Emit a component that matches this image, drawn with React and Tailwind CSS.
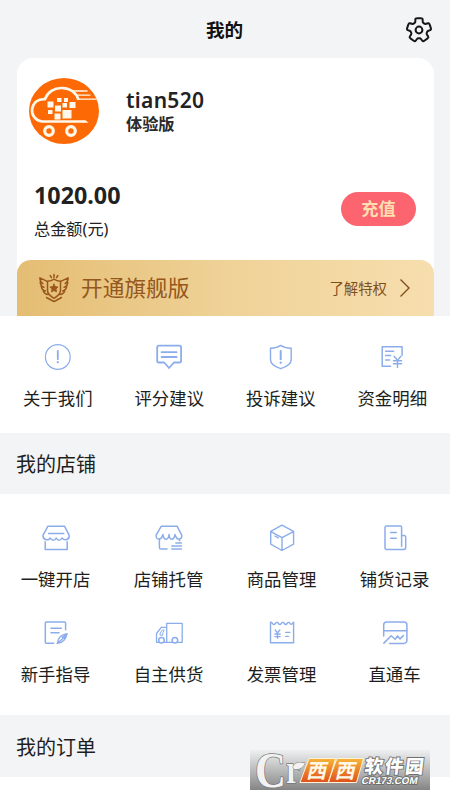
import { clsx } from 'clsx';

const Icon = ({ children }) => (
  <svg
    viewBox="0 0 30 30"
    className="h-[30px] w-[30px] shrink-0"
    fill="none"
    stroke="#8badeb"
    strokeWidth="1.5"
    strokeLinecap="round"
    strokeLinejoin="round"
  >
    {children}
  </svg>
);

const AboutIcon = () => (
  <Icon>
    <circle cx="14.8" cy="15" r="12.4" strokeWidth="1.2" />
    <path d="M14.8 8.8v8.4" strokeWidth="1.8" />
    <path d="M14.8 20.1v.1" strokeWidth="2.2" />
  </Icon>
);

const CommentIcon = () => (
  <Icon>
    <path d="M5 3.6h20.3a1.8 1.8 0 0 1 1.8 1.8v13.3a1.8 1.8 0 0 1-1.8 1.8H20L15.1 26l-4.900-5.500H5a1.800 1.800 0 0 1-1.800-1.800V5.400A1.800 1.800 0 0 1 5 3.600z" strokeWidth="1.8" />
    <path d="M7.600 10.200h15M7.600 15h15" strokeWidth="1.8" />
  </Icon>
);

const ComplaintIcon = () => (
  <Icon>
    <path d="M14.7 3.4c3 2.1 6.3 2.7 10.5 2.9v11.2c0 4-4.5 7.3-10.5 9.2-6-1.9-10.200-5.200-10.200-9.200V6.300c4-.2 7.200-.8 10.200-2.900z" strokeWidth="1.4" />
    <path d="M14.700 9v8.200" strokeWidth="2" />
    <path d="M14.700 20.700v.1" strokeWidth="2.300" />
  </Icon>
);

const FundIcon = () => (
  <Icon>
    <path d="M13.600 24.200H5.200V4.800h19.900v8.400" />
    <path d="M8.600 9.200h8M8.600 13.600h5M8.600 18h4" />
    <path d="M17.100 14.300l3.400 4 3.400-4M16.400 18.700h8.200M16.400 21.700h8.200M20.500 18.500v6.900" strokeWidth="1.4" />
  </Icon>
);

const ShopIcon = () => (
  <Icon>
    <path d="M6.800 3.300h16.800l4.500 8.800c.9 4.400-4.400 6.400-7.200 2.900-1.500 3-4.400 3-5.700 0-1.600 3-4.500 3-5.900 0-2.600 3.500-8 1.500-7.200-2.900z" />
    <path d="M7.600 10.500h15.200M4.200 18.700v7.800h22v-7.800" />
  </Icon>
);

const HostingIcon = () => (
  <Icon>
    <path d="M7.200 3.300h16l4.500 8.800c.9 4.400-4.500 6.400-6.800-.7-.7 6.300-5.400 6.600-5.900.1-.6 6.500-5.400 6.200-6.100-.1-1.800 7.100-7.300 5.100-6.800.7z" />
    <path d="M5.400 16v8.500a1.600 1.600 0 0 0 1.600 1.600h6M25.500 16.500v1.200M21.800 20h5.600M17.800 23h9.600M17.800 26.100h9.600" />
  </Icon>
);

const GoodsIcon = () => (
  <Icon>
    <path d="M15 2.200l11.600 6.200v12.700L15 27.500 3.700 21.100V8.400zM3.900 8.600L15 14.700l11.400-6.100M15 14.700v12.600M7.900 13l3.500 1.800" strokeWidth="1.4" />
  </Icon>
);

const RecordIcon = () => (
  <Icon>
    <path d="M6.500 3.100h14.100a1 1 0 0 1 1 1v8.400h2.600a1.500 1.500 0 0 1 1.500 1.500v10.600a1.900 1.900 0 0 1-1.900 1.900H6.500a1.500 1.500 0 0 1-1.500-1.500V4.600a1.500 1.500 0 0 1 1.500-1.500z" strokeWidth="1.5" />
    <path d="M21.600 12.500v11M10.700 9.500h5.600M10.700 15.200h5.600" />
  </Icon>
);

const GuideIcon = () => (
  <Icon>
    <path d="M12.700 25.300H5.300a1 1 0 0 1-1-1V5.100a1 1 0 0 1 1-1h18.300a1 1 0 0 1 1 1v6.700M10 10.300h10.300M10 14.700h8" />
    <path d="M26.100 15.600c-4.200.8-7.600 2.800-8.800 6.100l-.7 3.500c5.500-.5 8.200-3.300 9.500-9.600zM16.200 25.600l5.700-5.200" strokeWidth="1.4" />
    <path d="M26.100 15.600l-6 3.300 3.700 2.700z" fill="#8badeb" stroke="none" />
  </Icon>
);

const TruckIcon = () => (
  <Icon>
    <path d="M4.700 24.400H2.500v-8.900l4.800-6.200h5.400V5.300h15.500v19.100h-4.400M18 24.400h-7.700M12.700 9.300v15.100" strokeWidth="1.3" />
    <path d="M9.800 12.100H8.300L6.100 15v2.200h2.700v-2z" strokeWidth="1" />
    <circle cx="7.500" cy="22.300" r="2.800" fill="#fff" />
    <circle cx="20.900" cy="22.300" r="2.800" fill="#fff" />
  </Icon>
);

const InvoiceIcon = () => (
  <Icon>
    <path d="M3.500 4.300c1.300-.3 1.600.7 2.200 1.500.7.900 1.800.9 2.500 0l1-1.400h1.400l1 1.400c.8.900 1.800.9 2.500 0l1-1.400h1.400l1 1.400c.8.900 1.800.9 2.500 0l1-1.400h1.200l.9 1.200c.7.900 1.600.8 2.200 0l1.300-1.300v20.400H3.500z" strokeWidth="1.4" />
    <path d="M8.200 12l2.300 2.900 2.300-2.900M7.900 16h5.300M7.900 18.600h5.300M10.500 15v5.200M18.700 14.400h4.200M18.700 18.400h2.600" strokeWidth="1.4" />
  </Icon>
);

const TrainIcon = () => (
  <Icon>
    <path d="M3.700 18V6.900a3 3 0 0 1 3-3h17.200a3 3 0 0 1 3 3v15.500a3 3 0 0 1-3 3H9.600" />
    <path d="M3.700 12.800h23.200M3.900 25.100l7.300-7.400 4 3.500 2.300-3.300 2.500 3 3.300-3.300" />
  </Icon>
);

// Outline of a five-toothed gear around (14, 14), with every corner rounded.
const gearPath = () => {
  const points = [];
  for (let i = 0; i < 5; i += 1) {
    const tooth = -90 + i * 72;
    [
      [tooth - 17, 12.4],
      [tooth + 17, 12.4],
      [tooth + 26, 8.4],
      [tooth + 46, 8.4],
    ].forEach(([deg, r]) => {
      const rad = (deg * Math.PI) / 180;
      points.push([14 + r * Math.cos(rad), 14 + r * Math.sin(rad)]);
    });
  }
  const between = (a, b, t) => `${(a[0] + (b[0] - a[0]) * t).toFixed(2)} ${(a[1] + (b[1] - a[1]) * t).toFixed(2)}`;
  const corners = points.map((p, i) => {
    const prev = points[(i + points.length - 1) % points.length];
    const next = points[(i + 1) % points.length];
    return `${i === 0 ? 'M' : 'L'}${between(p, prev, 0.28)}Q${p[0].toFixed(2)} ${p[1].toFixed(2)} ${between(p, next, 0.28)}`;
  });
  return `${corners.join('')}Z`;
};

const SettingsIcon = () => (
  <svg viewBox="0 0 28 28" className="h-7 w-7" fill="none" stroke="#161719" strokeWidth="2" strokeLinejoin="round">
    <path d={gearPath()} />
    <circle cx="14" cy="14" r="3.400" />
  </svg>
);

const AvatarLogo = () => (
  <svg viewBox="0 0 70 66" className="h-[66px] w-[70px]" preserveAspectRatio="none">
    <ellipse cx="35" cy="33" rx="35" ry="33" fill="#fd6a05" />
    <g fill="none" stroke="#fff7ea">
      <path d="M55 43.500H13c-7-1-10.500-6.400-9.900-12.500.8-6.500 6-10.300 12.900-9.900C18.500 14 25 9.700 33 10c8.500.4 14.500 5 16.500 12" strokeWidth="2.700" />
      <path d="M43 13h15.500M46.500 17.100h15M49 21.200h19" strokeWidth="1.300" />
      <circle cx="20" cy="53" r="4.300" strokeWidth="3.200" />
      <circle cx="42" cy="53" r="4.300" strokeWidth="3.200" />
    </g>
    <g fill="#fff7ea">
      <path d="M54 42.200h2.500l3 2.600H54z" />
      <rect x="18.500" y="23.500" width="6" height="6" />
      <rect x="28" y="20" width="4.500" height="4" />
      <rect x="35" y="20" width="4" height="4" />
      <rect x="33.500" y="25" width="4.500" height="4.500" />
      <rect x="40.500" y="24" width="6" height="6" />
      <rect x="26" y="27.500" width="6" height="6" />
      <rect x="19" y="32" width="4.500" height="4" />
      <rect x="25.500" y="35.500" width="6" height="6" />
      <rect x="33.500" y="32" width="9" height="8.500" />
    </g>
  </svg>
);

const BadgeIcon = () => (
  <svg viewBox="0 0 32 30" className="h-[30px] w-8" fill="none" stroke="#9a561b" strokeWidth="1.500" strokeLinejoin="round" strokeLinecap="round">
    <path d="M16 6.200c2 1.500 4 2 6.500 2.100v9c0 3.600-2.600 5.800-6.500 8-3.900-2.200-6.500-4.400-6.500-8v-9c2.500-.1 4.500-.6 6.500-2.100z" />
    <path d="M16 11l1.200 2.600 2.900.4-2.100 2 .5 2.900-2.500-1.400-2.500 1.400.5-2.900-2.100-2 2.900-.4z" fill="#9a561b" strokeWidth=".8" />
    <path d="M8.700 8.200L1.900 4.900c.1 2.900 1 4.600 3 5.700M2.200 9.300c.4 3 1.500 4.300 3.700 5M3.300 13.700c.6 2.700 2 4 4.200 4.300M5.300 18.300c1 2.200 2.600 3.300 5.200 3.200M23.300 8.200l6.800-3.300c-.1 2.900-1 4.600-3 5.700M29.800 9.300c-.4 3-1.500 4.300-3.700 5M28.700 13.700c-.6 2.700-2 4-4.200 4.300M26.700 18.300c-1 2.200-2.600 3.300-5.200 3.200M8.500 24.500l5.500 3 2 1 2-1 5.500-3" />
    <path d="M16 1.500v3M12.200 2.600l1.200 1.900M19.800 2.600l-1.200 1.900" />
  </svg>
);

const Watermark = () => (
  <svg viewBox="0 0 180 40" className="absolute left-[250px] top-[750px] h-10 w-[180px] overflow-visible">
    <defs>
      <linearGradient id="plate" x1="0" y1="0" x2="0" y2="1">
        <stop offset="0" stopColor="#eff0f1" />
        <stop offset="1" stopColor="#858585" />
      </linearGradient>
      <linearGradient id="amber" x1="0" y1="0" x2="0" y2="1">
        <stop offset="0" stopColor="#f8b437" />
        <stop offset="1" stopColor="#df501c" />
      </linearGradient>
    </defs>
    <rect width="180" height="40" fill="url(#plate)" />
    <g fill="#f2f2f2" stroke="#777" strokeWidth="1.500" paintOrder="stroke" fontFamily="Liberation Serif, serif" fontWeight="700">
      <text x="5" y="36.500" fontSize="50" textLength="31" lengthAdjust="spacingAndGlyphs">C</text>
      <text x="36" y="33" fontSize="40" textLength="14" lengthAdjust="spacingAndGlyphs">r</text>
      <path d="M43 17c2-5 7-5 12-4-2 5-6 7-11 6z" strokeWidth="1" />
    </g>
    <path d="M59 8.500h26.500l-7 24H50zM87 8.500h26.500l-7 24H78z" fill="url(#amber)" stroke="#fff1d5" strokeWidth="1" />
    <g fontFamily="Noto Sans CJK SC, sans-serif" fontWeight="700">
      <g fill="#fff8e8" fontSize="20">
        <text transform="translate(56 28) skewX(-13)">西</text>
        <text transform="translate(84.500 28) skewX(-13)">西</text>
      </g>
      <g fill="#fff" stroke="#707070" strokeWidth="1.800" paintOrder="stroke">
        <text transform="translate(114 23) skewX(-7)" fontSize="18.500" fontWeight="900" textLength="59">软件园</text>
        <text transform="translate(111 33.500) skewX(-12)" fontSize="10" fontFamily="Liberation Sans, sans-serif" textLength="56">CR173.COM</text>
      </g>
    </g>
  </svg>
);

const services = [
  { label: '关于我们', icon: AboutIcon },
  { label: '评分建议', icon: CommentIcon },
  { label: '投诉建议', icon: ComplaintIcon },
  { label: '资金明细', icon: FundIcon },
];

const shopTools = [
  { label: '一键开店', icon: ShopIcon },
  { label: '店铺托管', icon: HostingIcon },
  { label: '商品管理', icon: GoodsIcon },
  { label: '铺货记录', icon: RecordIcon },
  { label: '新手指导', icon: GuideIcon },
  { label: '自主供货', icon: TruckIcon },
  { label: '发票管理', icon: InvoiceIcon },
  { label: '直通车', icon: TrainIcon },
];

const MenuGrid = ({ items, className }) => (
  <div className={clsx('grid grid-cols-4 bg-white', className)}>
    {items.map(({ label, icon: ItemIcon }) => (
      <button key={label} type="button" className="flex flex-col items-center gap-[13px]">
        <ItemIcon />
        <span className="whitespace-nowrap text-[17.400px] leading-[26px] text-[#1d1e20]">{label}</span>
      </button>
    ))}
  </div>
);

const SectionTitle = ({ children }) => (
  <h2 className="flex h-full items-center pl-4 pt-[3px] text-[20px] leading-7 text-[#1d1e20]">{children}</h2>
);

const App = () => (
  <div className="relative flex h-[800px] w-[450px] flex-col overflow-hidden bg-white font-['Noto_Sans','Noto_Sans_CJK_SC',sans-serif]">
    <div className="h-[316px] shrink-0 bg-[#f3f4f6] pl-[17px] pr-4">
      <header className="grid h-[58px] grid-cols-[1fr_auto_1fr] items-center pt-px">
        <span />
        <h1 className="-ml-0.5 text-[18.600px] font-bold text-[#101113]">我的</h1>
        <div className="flex justify-end pr-px">
          <SettingsIcon />
        </div>
      </header>

      <div className="flex h-[258px] flex-col rounded-t-[16px] bg-white">
        <div className="flex gap-[27px] pl-3 pt-5">
          <AvatarLogo />
          <div className="pt-[9px]">
            <p className="text-[21px] font-semibold leading-[26px] tracking-[0.3px] text-[#222]">tian520</p>
            <p className="text-[16.200px] font-bold leading-[22px] text-[#2a2a2a]">体验版</p>
          </div>
        </div>

        <div className="flex flex-1 items-start justify-between pl-[17px] pr-[18px] pt-[34px]">
          <div>
            <p className="text-[23.300px] font-bold leading-[34px] text-[#222]">1020.00</p>
            <p className="text-[16.200px] leading-[34px] text-[#222]">总金额(元)</p>
          </div>
          <button type="button" className="mt-[14px] flex h-[34px] w-[75px] items-center justify-center rounded-full bg-[#fc6470] text-[17.200px] font-bold text-[#ffdeb0]">
            充值
          </button>
        </div>

        <div className="flex h-14 shrink-0 items-center rounded-t-[14px] bg-linear-to-r from-[#e4bd73] via-[#efd297] to-[#f7deae] pl-[21px] pr-[23px] text-[#95571c]">
          <BadgeIcon />
          <span className="ml-[11px] pt-px text-[21.700px]">开通旗舰版</span>
          <span className="ml-auto pt-px text-[14.400px] text-[#80501c]">了解特权</span>
          <svg viewBox="0 0 12 20" className="ml-3 h-5 w-3" fill="none" stroke="#80501c" strokeWidth="1.400">
            <path d="M1.500 1.500L10 10l-8.500 8.500" />
          </svg>
        </div>
      </div>
    </div>

    <MenuGrid items={services} className="h-[117px] shrink-0 px-[2px] pt-[26px]" />

    <div className="h-[61px] shrink-0 bg-[#f3f4f6]">
      <SectionTitle>我的店铺</SectionTitle>
    </div>

    <MenuGrid items={shopTools} className="-mx-px h-[221px] shrink-0 content-start gap-y-[26px] pt-[29px]" />

    <div className="h-[62px] shrink-0 bg-[#f3f4f6]">
      <SectionTitle>我的订单</SectionTitle>
    </div>

    <Watermark />
  </div>
);

export default App;
